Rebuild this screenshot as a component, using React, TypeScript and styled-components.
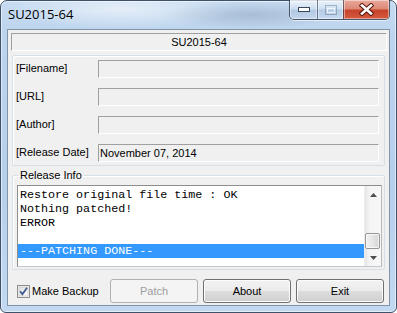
import styled, { createGlobalStyle } from "styled-components";

const GlobalStyle = createGlobalStyle`
  html, body {
    margin: 0;
    padding: 0;
  }
  body {
    width: 397px;
    height: 313px;
    overflow: hidden;
    background: #ffffff;
    font-family: "Liberation Sans", Arial, sans-serif;
  }
  * {
    box-sizing: border-box;
  }
`;

const logLines = [
  "Restore original file time : OK",
  "Nothing patched!",
  "ERROR",
  "",
];

const fields = [
  { label: "[Filename]", value: "" },
  { label: "[URL]", value: "" },
  { label: "[Author]", value: "" },
  { label: "[Release Date]", value: "November 07, 2014" },
];

export default function App() {
  return (
    <>
      <GlobalStyle />
      <Window>
        <TitleBar>
          <Title>SU2015-64</Title>
          <CaptionGroup>
            <CaptionButton $variant="min">
              <svg width="12" height="5" viewBox="0 0 12 5">
                <rect x="0.5" y="0.5" width="11" height="4" fill="#fff" stroke="#3a4656" />
              </svg>
            </CaptionButton>
            <CaptionButton $variant="max">
              <svg width="12" height="10" viewBox="0 0 12 10">
                <rect x="0.5" y="0.5" width="11" height="9" fill="none" stroke="rgba(90,110,135,0.45)" />
                <rect x="2.5" y="3.5" width="7" height="4" fill="none" stroke="rgba(255,255,255,0.7)" />
              </svg>
            </CaptionButton>
            <CaptionButton $variant="close">
              <svg width="15" height="13" viewBox="0 0 15 13">
                <path d="M3 2.5 L12 10.5 M12 2.5 L3 10.5" stroke="#5a1a10" strokeWidth="4.6" strokeLinecap="square" />
                <path d="M3 2.5 L12 10.5 M12 2.5 L3 10.5" stroke="#ffffff" strokeWidth="2.6" strokeLinecap="square" />
              </svg>
            </CaptionButton>
          </CaptionGroup>
        </TitleBar>
        <Client>
          <HeaderBox>SU2015-64</HeaderBox>
          <FieldGroup>
            {fields.map((f) => (
              <FieldRow key={f.label}>
                <FieldLabel>{f.label}</FieldLabel>
                <FieldBox>{f.value}</FieldBox>
              </FieldRow>
            ))}
          </FieldGroup>
          <ReleaseGroup>
            <Legend>Release Info</Legend>
            <LogBox>
              <LogLines>
                {logLines.map((l, i) => (
                  <LogLine key={i}>{l || "\u00a0"}</LogLine>
                ))}
                <LogLine $selected>---PATCHING DONE---</LogLine>
              </LogLines>
              <ScrollBar>
                <ScrollArrow>
                  <svg width="7" height="4" viewBox="0 0 7 4">
                    <path d="M0 4 L3.5 0 L7 4 Z" fill="#4d4d4d" />
                  </svg>
                </ScrollArrow>
                <ScrollTrack />
                <ScrollThumb />
                <ScrollArrow>
                  <svg width="7" height="4" viewBox="0 0 7 4">
                    <path d="M0 0 L7 0 L3.5 4 Z" fill="#4d4d4d" />
                  </svg>
                </ScrollArrow>
              </ScrollBar>
            </LogBox>
          </ReleaseGroup>
          <BottomRow>
            <CheckLabel>
              <svg width="13" height="13" viewBox="0 0 13 13">
                <defs>
                  <linearGradient id="cbg" x1="0" y1="0" x2="1" y2="1">
                    <stop offset="0" stopColor="#dcdcdc" />
                    <stop offset="1" stopColor="#ffffff" />
                  </linearGradient>
                </defs>
                <rect x="0.5" y="0.5" width="12" height="12" fill="#f4f4f4" stroke="#8e8f8f" />
                <rect x="2" y="2" width="9" height="9" fill="url(#cbg)" stroke="#c4c4c4" strokeWidth="0.6" />
                <path d="M3.2 6.2 L5.4 9.2 L10 2.8" fill="none" stroke="#3d5a8f" strokeWidth="1.8" />
              </svg>
              Make Backup
            </CheckLabel>
            <Buttons>
              <Button disabled>Patch</Button>
              <Button>About</Button>
              <Button>Exit</Button>
            </Buttons>
          </BottomRow>
        </Client>
      </Window>
    </>
  );
}

const Window = styled.div`
  width: 397px;
  height: 313px;
  display: flex;
  flex-direction: column;
  padding: 0 6px 6px;
  border: 1px solid #3f5168;
  border-radius: 7px 7px 6px 6px;
  background:
    radial-gradient(ellipse 90px 14px at 250px 14px, rgba(120, 140, 165, 0.35), transparent),
    radial-gradient(ellipse 120px 20px at 120px 8px, rgba(255, 255, 255, 0.55), transparent),
    linear-gradient(180deg, #c6dbf1 0%, #bcd4ee 12%, #b6cfeb 60%, #c3d9f2 100%);
  box-shadow: inset 0 0 0 1px rgba(255, 255, 255, 0.55);
`;

const TitleBar = styled.div`
  height: 28px;
  display: flex;
  align-items: flex-start;
  justify-content: space-between;
`;

const Title = styled.div`
  margin: 4px 0 0 1px;
  font-family: "Open Sans", "Noto Sans", sans-serif;
  font-size: 13px;
  line-height: 18px;
  color: #000;
`;

const CaptionGroup = styled.div`
  margin-top: -1px;
  height: 20px;
  display: flex;
  border: 1px solid rgba(40, 55, 75, 0.8);
  border-top: none;
  border-radius: 0 0 5px 5px;
  overflow: hidden;
  box-shadow: 0 1px 0 rgba(255, 255, 255, 0.6);
`;

const CaptionButton = styled.div<{ $variant: "min" | "max" | "close" }>`
  width: ${(p) => (p.$variant === "close" ? 46 : p.$variant === "min" ? 27 : 26)}px;
  display: flex;
  align-items: center;
  justify-content: center;
  border-left: ${(p) => (p.$variant === "min" ? "none" : "1px solid rgba(40, 55, 75, 0.6)")};
  box-shadow: inset 0 0 0 1px rgba(255, 255, 255, 0.45);
  background: ${(p) =>
    p.$variant === "close"
      ? "linear-gradient(180deg, #e9a99b 0%, #dd8a77 45%, #c7432b 55%, #d45b3e 100%)"
      : "linear-gradient(180deg, rgba(255,255,255,0.65) 0%, rgba(220,232,245,0.55) 45%, rgba(175,198,225,0.6) 55%, rgba(200,220,240,0.7) 100%)"};
`;

const Client = styled.div`
  flex: 1;
  display: flex;
  flex-direction: column;
  background: #f0f0f0;
  border: 1px solid #7f93a9;
`;

const HeaderBox = styled.div`
  margin: 3px 2px 0 3px;
  height: 18px;
  display: flex;
  align-items: center;
  justify-content: center;
  font-size: 11px;
  color: #000;
  border: 1px solid;
  border-color: #a0a0a0 #ffffff #ffffff #a0a0a0;
`;

const FieldGroup = styled.div`
  margin: 4px 4px 0 4px;
  height: 111px;
  padding: 4px 5px 3px 3px;
  display: flex;
  flex-direction: column;
  gap: 10px;
  border: 1px solid #d5dfe5;
  border-radius: 2px;
  box-shadow: inset 1px 1px 0 #ffffff;
`;

const FieldRow = styled.div`
  display: grid;
  grid-template-columns: 82px 1fr;
  align-items: center;
`;

const FieldLabel = styled.div`
  margin-top: -2px;
  font-size: 11px;
  color: #000;
`;

const FieldBox = styled.div`
  height: 18px;
  padding: 0 0 0 1px;
  display: flex;
  align-items: center;
  font-size: 11px;
  color: #000;
  background: #f0f0f0;
  border: 1px solid;
  border-color: #a0a0a0 #ffffff #ffffff #a0a0a0;
`;

const ReleaseGroup = styled.fieldset`
  margin: 3px 4px 0 4px;
  padding: 3px 2px 2px 4px;
  min-width: 0;
  border: 1px solid #d5dfe5;
  border-radius: 2px;
  box-shadow: inset 1px 1px 0 #ffffff;
`;

const Legend = styled.legend`
  margin-left: 1px;
  padding: 0 2px;
  font-size: 11px;
  line-height: 13px;
  color: #000;
`;

const LogBox = styled.div`
  height: 82px;
  display: flex;
  background: #ffffff;
  border: 1px solid;
  border-color: #8e8e8e #b9b9b9 #c8c8c8 #8e8e8e;
`;

const LogLines = styled.div`
  flex: 1;
  padding-top: 2px;
  overflow: hidden;
`;

const LogLine = styled.div<{ $selected?: boolean }>`
  height: 14px;
  padding-left: 2px;
  font-family: "Liberation Mono", "Courier New", monospace;
  font-size: 11.7px;
  line-height: 14px;
  white-space: pre;
  color: ${(p) => (p.$selected ? "#ffffff" : "#000000")};
  background: ${(p) => (p.$selected ? "#3399ff" : "transparent")};
`;

const ScrollBar = styled.div`
  width: 17px;
  display: flex;
  flex-direction: column;
  background: linear-gradient(90deg, #e6e6e6 0%, #f5f5f5 30%, #f7f7f7 100%);
  border-left: 1px solid #ededed;
`;

const ScrollArrow = styled.div`
  height: 17px;
  display: flex;
  align-items: center;
  justify-content: center;
`;

const ScrollTrack = styled.div`
  flex: 1;
`;

const ScrollThumb = styled.div`
  height: 16px;
  margin: 0 1px 0 0;
  border: 1px solid #979797;
  border-radius: 2px;
  background: linear-gradient(90deg, #f2f2f2 0%, #e6e6e6 50%, #d6d6d6 100%);
  box-shadow: inset 0 0 0 1px rgba(255, 255, 255, 0.7);
`;

const BottomRow = styled.div`
  margin-top: 9px;
  height: 24px;
  padding: 0 5px 0 9px;
  display: flex;
  align-items: center;
`;

const CheckLabel = styled.label`
  display: flex;
  align-items: center;
  gap: 2px;
  font-size: 11px;
  color: #000;
`;

const Buttons = styled.div`
  margin-left: auto;
  display: flex;
  gap: 5px;
`;

const Button = styled.button`
  width: 88px;
  height: 24px;
  padding: 0;
  font-family: "Liberation Sans", Arial, sans-serif;
  font-size: 11px;
  color: #000;
  border: 1px solid #707070;
  border-radius: 3px;
  background: linear-gradient(180deg, #f2f2f2 0%, #ebebeb 50%, #dddddd 51%, #cfcfcf 100%);
  box-shadow: inset 0 0 0 1px #fcfcfc;

  &:disabled {
    color: #9d9d9d;
    border-color: #adb2b5;
    background: #f4f4f4;
    box-shadow: none;
  }
`;
